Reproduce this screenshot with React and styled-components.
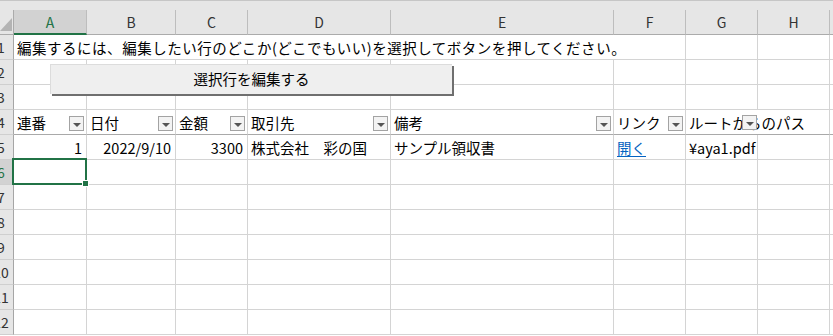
import React from "react";
import styled, { createGlobalStyle } from "styled-components";

const gridLine = "#d4d4d4";
const headerBg = "#e6e6e6";
const headerLine = "#bdbdbd";
const selectedHeaderBg = "#d2d2d2";
const excelGreen = "#217346";
const linkColor = "#0563c1";
const cellFont = '"Noto Sans CJK JP", "Noto Sans", sans-serif';

const columns = [
  { name: "A", width: 73 },
  { name: "B", width: 89 },
  { name: "C", width: 72 },
  { name: "D", width: 143 },
  { name: "E", width: 223 },
  { name: "F", width: 72 },
  { name: "G", width: 72 },
  { name: "H", width: 72 },
];

const GlobalStyle = createGlobalStyle`
  * { box-sizing: border-box; }
  html, body {
    margin: 0;
    padding: 0;
    background: #fff;
    overflow: hidden;
  }
  body {
    font-family: ${cellFont};
  }
`;

const Page = styled.div`
  width: 833px;
  height: 336px;
  overflow: hidden;
  background: #fff;
`;

const TopBand = styled.div`
  height: 10px;
  background: ${headerBg};
  border-top: 1px solid #c6c6c6;
`;

const Sheet = styled.div`
  position: relative;
  display: grid;
  grid-template-columns: 14px ${columns.map((c) => c.width + "px").join(" ")} 1fr;
  grid-auto-rows: 25px;
`;

const Corner = styled.div`
  background: ${headerBg};
  border-right: 1px solid #ababab;
  border-bottom: 1px solid #ababab;
  display: flex;
  align-items: flex-end;
  justify-content: flex-end;
  padding: 0 1px 3px 0;
`;

const ColHeader = styled.div`
  background: ${(p) => (p.$active ? selectedHeaderBg : headerBg)};
  border-right: 1px solid ${headerLine};
  border-bottom: ${(p) => (p.$active ? `2px solid ${excelGreen}` : "1px solid #ababab")};
  color: ${(p) => (p.$active ? excelGreen : "#333")};
  font-size: 14px;
  display: flex;
  align-items: center;
  justify-content: center;
  padding-top: ${(p) => (p.$active ? "1px" : "0")};
`;

const RowHeader = styled.div`
  background: ${(p) => (p.$active ? selectedHeaderBg : headerBg)};
  border-right: ${(p) => (p.$active ? `2px solid ${excelGreen}` : "1px solid #a6a6a6")};
  border-bottom: 1px solid #cfcfcf;
  color: ${(p) => (p.$active ? excelGreen : "#333")};
  font-size: 14px;
  overflow: hidden;
  display: flex;
  align-items: center;
`;

/* the row header is scrolled: only its right part is on screen */
const RowNumber = styled.span`
  flex: none;
  width: 26px;
  margin-left: -12px;
  text-align: center;
`;

const Cell = styled.div`
  position: relative;
  grid-column: span ${(p) => p.$span || 1};
  border-right: 1px solid ${gridLine};
  border-bottom: 1px solid ${(p) => (p.$headRow ? "#a9a9a9" : gridLine)};
  font-size: 14.5px;
  letter-spacing: ${(p) => p.$spacing || "0"};
  color: #000;
  white-space: nowrap;
  display: flex;
  align-items: center;
  justify-content: ${(p) => (p.$right ? "flex-end" : "flex-start")};
  padding: 0 4px 0 3px;
  overflow: visible;
`;

const Selection = styled.div`
  position: absolute;
  left: -2px;
  top: -2px;
  right: -1px;
  bottom: -1px;
  border: 2px solid ${excelGreen};
  pointer-events: none;
  z-index: 2;

  &::after {
    content: "";
    position: absolute;
    right: -4px;
    bottom: -4px;
    width: 5px;
    height: 5px;
    background: ${excelGreen};
    border: 1px solid #fff;
  }
`;

const HeaderCell = styled(Cell)`
  justify-content: space-between;
  padding-right: 2px;
`;

const FilterButton = styled.span`
  flex: none;
  width: 15px;
  height: 15px;
  margin-top: 3px;
  border: 1px solid #a3a3a3;
  background: #f3f3f3;
  display: flex;
  align-items: center;
  justify-content: center;
  ${(p) =>
    p.$overlay &&
    `
    position: absolute;
    left: 56px;
    top: 5px;
    margin: 0;
    z-index: 1;
  `}

  &::before {
    content: "";
    display: block;
    margin-top: 2px;
    border-left: 4px solid transparent;
    border-right: 4px solid transparent;
    border-top: 4px solid #555;
  }
`;

const Link = styled.span`
  color: ${linkColor};
  text-decoration: underline;
  text-underline-offset: 2px;
`;

const EditButton = styled.div`
  position: absolute;
  left: 50px;
  top: 54px;
  width: 402px;
  height: 30px;
  background: #efefef;
  border-top: 1px solid #dcdcdc;
  border-left: 1px solid #dcdcdc;
  box-shadow: 2px 2px 0 #6f6f6f;
  font-family: ${cellFont};
  font-size: 14.5px;
  color: #000;
  display: flex;
  align-items: center;
  justify-content: center;
  padding-bottom: 2px;
  z-index: 3;
`;

const SelectAll = () => (
  <svg width="12" height="13" viewBox="0 0 12 13">
    <polygon points="12,0 12,13 0,13" fill="#b4b4b4" />
  </svg>
);

const tableHeads = ["連番", "日付", "金額", "取引先", "備考", "リンク"];

const EmptyCells = ({ count, headRow }) =>
  Array.from({ length: count }).map((_, i) => <Cell key={i} $headRow={headRow} />);

const App = () => {
  const rows = [];
  for (let r = 1; r <= 12; r++) {
    const active = r === 6;
    let cells;
    if (r === 1) {
      cells = (
        <>
          <Cell $span={6} $spacing="0.52px">
            編集するには、編集したい行のどこか(どこでもいい)を選択してボタンを押してください。
          </Cell>
          <EmptyCells count={3} />
        </>
      );
    } else if (r === 4) {
      cells = (
        <>
          {tableHeads.map((h) => (
            <HeaderCell key={h} $headRow>
              <span>{h}</span>
              <FilterButton />
            </HeaderCell>
          ))}
          <Cell $span={2} $headRow>
            ルートからのパス
            <FilterButton $overlay />
          </Cell>
          <Cell $headRow />
        </>
      );
    } else if (r === 5) {
      cells = (
        <>
          <Cell $right>1</Cell>
          <Cell $right>2022/9/10</Cell>
          <Cell $right>3300</Cell>
          <Cell>株式会社　彩の国</Cell>
          <Cell>サンプル領収書</Cell>
          <Cell>
            <Link>開く</Link>
          </Cell>
          <Cell>¥aya1.pdf</Cell>
          <EmptyCells count={2} />
        </>
      );
    } else if (active) {
      cells = (
        <>
          <Cell>
            <Selection />
          </Cell>
          <EmptyCells count={8} />
        </>
      );
    } else {
      cells = <EmptyCells count={9} />;
    }
    rows.push(
      <React.Fragment key={r}>
        <RowHeader $active={active}>
          <RowNumber>{r}</RowNumber>
        </RowHeader>
        {cells}
      </React.Fragment>
    );
  }

  return (
    <Page>
      <GlobalStyle />
      <TopBand />
      <Sheet>
        <Corner>
          <SelectAll />
        </Corner>
        {columns.map((c) => (
          <ColHeader key={c.name} $active={c.name === "A"}>
            {c.name}
          </ColHeader>
        ))}
        <ColHeader />
        {rows}
        <EditButton>選択行を編集する</EditButton>
      </Sheet>
    </Page>
  );
};

export default App;
